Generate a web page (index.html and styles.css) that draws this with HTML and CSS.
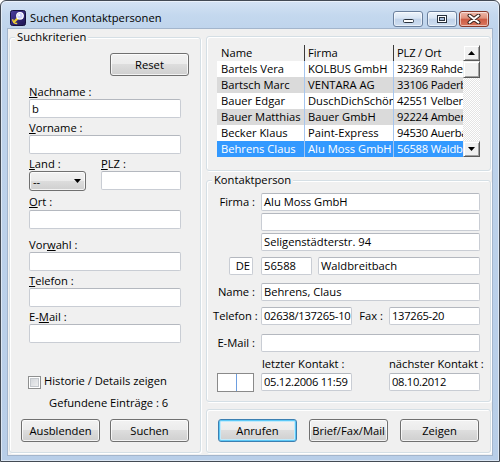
FILE: index.html
```html
<!DOCTYPE html>
<html lang="de">
<head>
<meta charset="utf-8">
<title>Suchen Kontaktpersonen</title>
<link rel="stylesheet" href="styles.css">
</head>
<body>
<div class="window">
  <header class="titlebar">
    <svg class="app-icon" width="16" height="16" viewBox="0 0 16 16">
      <defs>
        <linearGradient id="ig" x1="0" y1="0" x2="1" y2="1">
          <stop offset="0" stop-color="#4b3c9e"/>
          <stop offset="1" stop-color="#1d1552"/>
        </linearGradient>
      </defs>
      <rect x="0.5" y="0.5" width="15" height="15" rx="2" fill="url(#ig)" stroke="#15103c"/>
      <path d="M2.6 9.2 Q3 13.4 7.2 13.6" fill="none" stroke="#f2d23a" stroke-width="1.5"/>
      <path d="M7.4 8.6 L4 12" stroke="#e8c830" stroke-width="2.2" stroke-linecap="round"/>
      <circle cx="10" cy="5.8" r="3.3" fill="#cfd0ff" stroke="#ffffff" stroke-width="1.2"/>
      <circle cx="9.2" cy="5" r="1.1" fill="#ffffff"/>
    </svg>
    <span class="title">Suchen Kontaktpersonen</span>
    <div class="caption">
      <span class="cap-btn cap-min">
        <svg width="11" height="4" viewBox="0 0 11 4"><rect x="0.5" y="0.5" width="10" height="3" rx="1" fill="#fff" stroke="#28313d"/></svg>
      </span>
      <span class="cap-btn cap-max">
        <svg width="10" height="8" viewBox="0 0 10 8"><rect x="0.5" y="0.5" width="9" height="7" fill="#fff" stroke="#28313d"/><rect x="2.5" y="2.5" width="5" height="3" fill="#a9bedb" stroke="#28313d"/></svg>
      </span>
      <span class="cap-btn cap-close">
        <svg width="14" height="10" viewBox="0 0 14 10"><path d="M2.5 1.5 L11.5 8.5 M11.5 1.5 L2.5 8.5" stroke="#3a2620" stroke-width="4" stroke-linecap="round"/><path d="M2.5 1.5 L11.5 8.5 M11.5 1.5 L2.5 8.5" stroke="#fff" stroke-width="2" stroke-linecap="round"/></svg>
      </span>
    </div>
  </header>

  <main class="client">
    <section class="group search">
      <span class="group-label">Suchkriterien</span>
      <button class="btn btn-reset">Reset</button>

      <div class="field f-gap8">
        <div class="lbl"><u>N</u>achname :</div>
        <div class="tb">b</div>
      </div>
      <div class="field f-gap2">
        <div class="lbl"><u>V</u>orname :</div>
        <div class="tb"></div>
      </div>
      <div class="field field-row f-gap2">
        <div class="sub land">
          <div class="lbl"><u>L</u>and :</div>
          <div class="combo"><span>--</span><svg width="7" height="4" viewBox="0 0 7 4"><path d="M0 0h7L3.5 4z" fill="#000"/></svg></div>
        </div>
        <div class="sub plz">
          <div class="lbl"><u>P</u>LZ :</div>
          <div class="tb tb-plz"></div>
        </div>
      </div>
      <div class="field f-gap3">
        <div class="lbl lbl-ort"><u>O</u>rt :</div>
        <div class="tb"></div>
      </div>
      <div class="field f-gap8">
        <div class="lbl">Vor<u>w</u>ahl :</div>
        <div class="tb"></div>
      </div>
      <div class="field f-gap2">
        <div class="lbl"><u>T</u>elefon :</div>
        <div class="tb"></div>
      </div>
      <div class="field f-gap2">
        <div class="lbl">E-<u>M</u>ail :</div>
        <div class="tb"></div>
      </div>

      <label class="chkrow"><span class="chk"></span><span>Historie / Details zeigen</span></label>
      <div class="found">Gefundene Einträge : 6</div>
      <div class="search-btns">
        <button class="btn">Ausblenden</button>
        <button class="btn">Suchen</button>
      </div>
    </section>

    <div class="right">
      <section class="group results">
        <div class="list">
          <div class="cols">
            <div class="row head"><div class="c c1">Name</div><div class="c c2">Firma</div><div class="c c3">PLZ / Ort</div></div>
            <div class="row"><div class="c c1">Bartels Vera</div><div class="c c2">KOLBUS GmbH</div><div class="c c3">32369 Rahden</div></div>
            <div class="row alt"><div class="c c1">Bartsch Marc</div><div class="c c2">VENTARA AG</div><div class="c c3">33106 Paderborn</div></div>
            <div class="row"><div class="c c1">Bauer Edgar</div><div class="c c2">DuschDichSchön</div><div class="c c3">42551 Velbert</div></div>
            <div class="row alt"><div class="c c1">Bauer Matthias</div><div class="c c2">Bauer GmbH</div><div class="c c3">92224 Amberg</div></div>
            <div class="row"><div class="c c1">Becker Klaus</div><div class="c c2">Paint-Express</div><div class="c c3">94530 Auerbach</div></div>
            <div class="row sel"><div class="c c1">Behrens Claus</div><div class="c c2">Alu Moss GmbH</div><div class="c c3">56588 Waldbreitbach</div></div>
          </div>
          <div class="vscroll">
            <div class="sb-btn"><svg width="7" height="4" viewBox="0 0 7 4"><path d="M0 4h7L3.5 0z" fill="#000"/></svg></div>
            <div class="sb-thumb"></div>
            <div class="sb-track"></div>
            <div class="sb-btn"><svg width="7" height="4" viewBox="0 0 7 4"><path d="M0 0h7L3.5 4z" fill="#000"/></svg></div>
          </div>
        </div>
      </section>

      <section class="group contact">
        <span class="group-label">Kontaktperson</span>
        <div class="crow">
          <div class="clbl">Firma :</div>
          <div class="tb w-full">Alu Moss GmbH</div>
        </div>
        <div class="crow g2">
          <div class="clbl"></div>
          <div class="tb w-full"></div>
        </div>
        <div class="crow g2">
          <div class="clbl"></div>
          <div class="tb w-full">Seligenstädterstr. 94</div>
        </div>
        <div class="crow g6">
          <div class="clbl cell-de"><div class="tb w-de">DE</div></div>
          <div class="tb w-plz">56588</div>
          <div class="tb w-ort">Waldbreitbach</div>
        </div>
        <div class="crow g8">
          <div class="clbl">Name :</div>
          <div class="tb w-full">Behrens, Claus</div>
        </div>
        <div class="crow g6">
          <div class="clbl">Telefon :</div>
          <div class="tb w-half">02638/137265-10</div>
          <div class="clbl fax">Fax :</div>
          <div class="tb w-half">137265-20</div>
        </div>
        <div class="crow g9">
          <div class="clbl">E-Mail :</div>
          <div class="tb w-full"></div>
        </div>
        <div class="lrow">
          <div class="lrow-spacer"></div>
          <div class="lrow-last">letzter Kontakt :</div>
          <div>nächster Kontakt :</div>
        </div>
        <div class="crow g2">
          <div class="clbl cell-mark"><div class="mark"></div></div>
          <div class="tb w-half">05.12.2006 11:59</div>
          <div class="clbl fax"></div>
          <div class="tb w-half">08.10.2012</div>
        </div>
      </section>

      <section class="group actions">
        <button class="btn btn-default">Anrufen</button>
        <button class="btn">Brief/Fax/Mail</button>
        <button class="btn">Zeigen</button>
      </section>
    </div>
  </main>
</div>
</body>
</html>
```

FILE: styles.css
```css
* { box-sizing: border-box; }

html, body {
  margin: 0;
  padding: 0;
  background: #fff;
}

body {
  font-family: "Open Sans", "Noto Sans", "DejaVu Sans", sans-serif;
  font-size: 11.2px;
  line-height: 15px;
  color: #000;
}

u {
  text-decoration: underline;
  text-decoration-thickness: 1px;
  text-underline-offset: 1px;
}

/* ---------- window frame ---------- */
.window {
  width: 500px;
  height: 462px;
  border: 1px solid #434a54;
  border-radius: 6px 6px 0 0;
  background: linear-gradient(180deg, #d5e3f4 0px, #c4d8ee 14px, #bfd4ec 28px, #b8cee8 100%);
  box-shadow: inset 0 0 0 1px rgba(255, 255, 255, .5);
  display: flex;
  flex-direction: column;
  overflow: hidden;
}

.titlebar {
  flex: none;
  height: 28px;
  display: flex;
  align-items: flex-start;
  padding: 0 10px 0 9px;
}

.app-icon {
  flex: none;
  margin-top: 9px;
}

.title {
  margin: 9px 0 0 4px;
  white-space: nowrap;
}

.caption {
  display: flex;
  margin-left: auto;
  margin-top: 10px;
}

.cap-btn {
  width: 30px;
  height: 16px;
  border: 1px solid #6a7f9c;
  border-radius: 3px;
  background: linear-gradient(#eef4fb 0%, #d7e4f3 45%, #c0d2e9 50%, #cfdef0 100%);
  box-shadow: inset 0 0 0 1px rgba(255, 255, 255, .55);
  display: flex;
  justify-content: center;
  align-items: flex-start;
}

.cap-btn svg { display: block; }

.cap-min { margin-right: 4px; padding-top: 7px; }
.cap-max { margin-right: 2px; padding-top: 3px; }
.cap-close {
  padding-top: 2px;
  border-color: #86392b;
  background: linear-gradient(#efbaac 0%, #df907b 45%, #cc5a42 50%, #d9785f 100%);
}

/* ---------- client area ---------- */
.client {
  flex: none;
  height: 426px;
  margin: 0 7px;
  background: #f0f0f0;
  display: flex;
  align-items: flex-start;
  padding: 7px 1px 0 1px;
  box-shadow: 0 0 0 1px #a3b5cc;
}

.group {
  position: relative;
  border: 1px solid #d5dfe5;
  border-radius: 3px;
  box-shadow: inset 1px 1px 0 #fff, 1px 1px 0 #fff;
}

.group-label {
  position: absolute;
  top: -9px;
  left: 5px;
  padding: 0 2px;
  background: #f0f0f0;
  white-space: nowrap;
}

/* ---------- controls ---------- */
.btn {
  font: inherit;
  line-height: 15px;
  color: #000;
  width: 79px;
  height: 23px;
  padding: 0;
  border: 1px solid #707070;
  border-radius: 3px;
  background: linear-gradient(#f2f2f2 0%, #ebebeb 50%, #dddddd 50%, #cfcfcf 100%);
  box-shadow: inset 0 0 0 1px rgba(255, 255, 255, .75);
  white-space: nowrap;
}

.btn-default {
  border-color: #3c7fb1;
  box-shadow: inset 0 0 0 1px #5cc8f6, inset 0 0 0 2px #c2eafb;
}

.tb {
  flex: none;
  background: #fff;
  border: 1px solid #c9cdd4;
  border-top-color: #b4b8bf;
  border-radius: 2px;
  padding: 0 2px;
  white-space: nowrap;
  overflow: hidden;
}

/* ---------- search panel ---------- */
.search {
  flex: none;
  width: 192px;
  height: 416px;
  margin-top: 1px;
  display: flex;
  flex-direction: column;
  align-items: flex-start;
}

.btn-reset { margin: 15px 0 0 100px; }

.field { margin-left: 19px; }
.f-gap2 { margin-top: 2px; }
.f-gap3 { margin-top: 3px; }
.f-gap8 { margin-top: 8px; }

.lbl {
  height: 15px;
  line-height: 15px;
  white-space: nowrap;
}

.lbl-ort { margin-bottom: 1px; }

.search .tb {
  width: 152px;
  height: 19px;
  line-height: 17px;
}

.field-row { display: flex; }

.land { width: 57px; }
.plz { margin-left: 15px; }
.search .tb-plz { width: 80px; }

.combo {
  width: 57px;
  height: 20px;
  border: 1px solid #707070;
  border-radius: 3px;
  background: linear-gradient(#f2f2f2 0%, #ebebeb 50%, #dddddd 50%, #cfcfcf 100%);
  box-shadow: inset 0 0 0 1px rgba(255, 255, 255, .75);
  display: flex;
  align-items: center;
  justify-content: space-between;
  padding: 0 4px 0 3px;
  line-height: 15px;
}

.combo svg { display: block; }

.chkrow {
  margin: 30px 0 0 18px;
  height: 15px;
  display: flex;
  align-items: flex-start;
  white-space: nowrap;
}

.chk {
  flex: none;
  width: 13px;
  height: 13px;
  margin: 3px 3px 0 0;
  border: 1px solid #8e8f8f;
  background: linear-gradient(135deg, #cdd1d6, #f4f4f4);
  box-shadow: inset 0 0 0 1px #fff, inset 0 0 0 2px #c3c7cc;
}

.found {
  margin: 7px 0 0 39px;
  white-space: nowrap;
}

.search-btns {
  margin: 9px 0 0 11px;
  display: flex;
  gap: 10px;
}

/* ---------- right column ---------- */
.right {
  flex: none;
  width: 285px;
  margin-left: 5px;
  display: flex;
  flex-direction: column;
}

.results {
  height: 135px;
  padding: 8px 10px;
}

.list {
  display: flex;
  height: 112px;
}

.cols { width: 246px; flex: none; }

.row {
  display: flex;
  height: 16px;
  line-height: 16px;
  background: #fff;
}

.row.head { background: #f0f0f0; }
.row.alt { background: #dadada; }
.row.sel { background: #3399ff; color: #fff; }

.c {
  flex: none;
  overflow: hidden;
  white-space: nowrap;
  padding-left: 3px;
}

.c1 { width: 88px; padding-left: 4px; border-right: 1px solid #a7c6ee; }
.c2 { width: 89px; border-right: 1px solid #a7c6ee; }
.c3 { width: 69px; letter-spacing: -0.2px; }

.head .c1,
.head .c2 { border-right-color: #3a3a3a; }

.vscroll {
  width: 17px;
  flex: none;
  display: flex;
  flex-direction: column;
}

.sb-btn,
.sb-thumb {
  flex: none;
  background: #f0f0f0;
  border: 1px solid;
  border-color: #f0f0f0 #5a5a5a #5a5a5a #f0f0f0;
  box-shadow: inset 1px 1px 0 #fff, inset -1px -1px 0 #a0a0a0;
}

.sb-btn {
  height: 16px;
  display: flex;
  align-items: center;
  justify-content: center;
}

.sb-btn svg { display: block; }

.sb-thumb { height: 17px; }

.sb-track {
  flex: 1;
  background: repeating-conic-gradient(#ffffff 0 25%, #e4e4e4 0 50%) 0 0 / 2px 2px;
}

/* ---------- contact ---------- */
.contact {
  height: 222px;
  margin-top: 9px;
  padding: 12px 0 0 6px;
}

.crow {
  display: flex;
  height: 18px;
}

.g2 { margin-top: 2px; }
.g6 { margin-top: 6px; }
.g8 { margin-top: 8px; }
.g9 { margin-top: 9px; }

.clbl {
  flex: none;
  width: 48px;
  padding-right: 6px;
  text-align: right;
  line-height: 18px;
  white-space: nowrap;
}

.clbl.fax { width: 37px; }

.contact .tb {
  height: 18px;
  line-height: 16px;
}

.w-full { width: 219px; }
.w-half { width: 91px; letter-spacing: -0.3px; }
.w-plz { width: 51px; }
.w-ort { width: 162px; margin-left: 6px; }

.cell-de { padding: 0 0 0 16px; }
.contact .w-de { width: 24px; }

.cell-mark { padding: 0 0 0 4px; }

.mark {
  width: 37px;
  height: 19px;
  border: 1px solid #8a8a8a;
  background: linear-gradient(to right, #fff 18px, #6d9ee0 18px, #6d9ee0 19px, #fff 19px);
}

.lrow {
  display: flex;
  height: 15px;
  margin-top: 4px;
  white-space: nowrap;
}

.lrow-spacer { width: 48px; flex: none; }
.lrow-last { width: 128px; flex: none; padding-left: 1px; }

/* ---------- actions ---------- */
.actions {
  height: 44px;
  margin-top: 7px;
  padding: 9px 0 0 11px;
  display: flex;
  align-items: flex-start;
  gap: 12px;
}
```
